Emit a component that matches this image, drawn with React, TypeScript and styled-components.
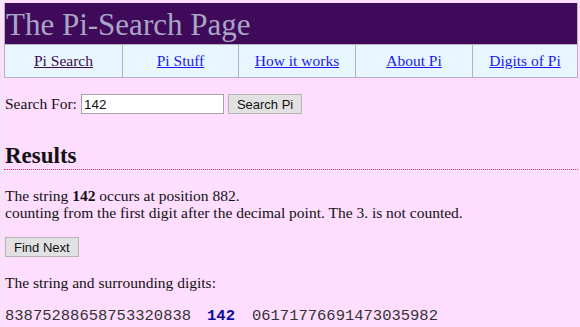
import React from 'react';
import styled, { createGlobalStyle } from 'styled-components';

const navItems = [
  { label: 'Pi Search', visited: true },
  { label: 'Pi Stuff', visited: false },
  { label: 'How it works', visited: false },
  { label: 'About Pi', visited: false },
  { label: 'Digits of Pi', visited: false },
];

const App: React.FC = () => {
  return (
    <>
      <GlobalStyle />
      <Page>
        <Masthead>
          <Title>The Pi-Search Page</Title>
          <NavBar>
            {navItems.map((item) => (
              <NavCell key={item.label}>
                <NavLink href="#" $visited={item.visited}>
                  {item.label}
                </NavLink>
              </NavCell>
            ))}
          </NavBar>
        </Masthead>

        <Content>
          <SearchForm onSubmit={(e) => e.preventDefault()}>
            <Label htmlFor="search">Search For:</Label>
            <SearchInput id="search" defaultValue="142" />
            <Button type="submit">Search Pi</Button>
          </SearchForm>

          <Heading>Results</Heading>

          <Text>
            The string <b>142</b> occurs at position 882.
            <br />
            counting from the first digit after the decimal point. The 3. is not counted.
          </Text>

          <Button type="button">Find Next</Button>

          <Text>The string and surrounding digits:</Text>

          <Digits>
            83875288658753320838
            <Match>142</Match>
            06171776691473035982
          </Digits>
        </Content>
      </Page>
    </>
  );
};

const GlobalStyle = createGlobalStyle`
  html, body {
    margin: 0;
    padding: 0;
    background: #ffddff;
  }
  body {
    font-family: "Liberation Serif", "Times New Roman", serif;
    color: #111;
  }
`;

const Page = styled.div`
  min-height: 327px;
  padding: 3px 2px 0 3px;
  border-left: 1px solid #ece6ee;
  box-sizing: border-box;
`;

const Masthead = styled.div`
  border: 1px solid #b8b0bc;
  border-top: none;
`;

const Title = styled.h1`
  margin: 0;
  height: 41px;
  padding: 0 0 0 1px;
  background: #400a5a;
  color: #a8a6c6;
  font-size: 31px;
  font-weight: normal;
  line-height: 44px;
`;

const NavBar = styled.nav`
  display: grid;
  grid-template-columns: 117px 116px 117px 117px 1fr;
  background: #e8f6ff;
  border-top: 1px solid #b8b0bc;
`;

const NavCell = styled.div`
  height: 32px;
  display: flex;
  align-items: center;
  justify-content: center;
  border-left: 1px solid #b4b4b4;

  &:first-child {
    border-left: none;
  }
`;

const NavLink = styled.a<{ $visited: boolean }>`
  font-size: 15.5px;
  color: ${(p) => (p.$visited ? '#3a0a4e' : '#1a1aee')};
  text-decoration: underline;
`;

const Content = styled.main`
  padding: 16px 0 0 1px;
  font-size: 15.5px;
`;

const SearchForm = styled.form`
  display: flex;
  align-items: center;
  gap: 4px;
  height: 20px;
`;

const Label = styled.label``;

const SearchInput = styled.input`
  width: 137px;
  height: 18px;
  padding: 0 2px;
  border: 1px solid #a8a0a8;
  font-family: "Liberation Sans", Arial, sans-serif;
  font-size: 13.5px;
  color: #111;
  background: #fff;
`;

const Button = styled.button`
  height: 20px;
  padding: 0 8px;
  border: 1px solid #b4b4b4;
  background: #e1e1e1;
  font-family: "Liberation Sans", Arial, sans-serif;
  font-size: 13px;
  color: #111;
  border-radius: 0;
`;

const Heading = styled.h2`
  margin: 29px 0 0 -1px;
  padding: 0 0 0 1px;
  font-size: 23px;
  line-height: 26px;
  border-bottom: 1px dotted #f0305a;
`;

const Text = styled.p`
  margin: 17px 0 16px;
  line-height: 17px;
`;

const Digits = styled.pre`
  margin: 14px 0 0;
  font-family: "Liberation Mono", "Courier New", monospace;
  font-size: 15.5px;
  color: #333;
`;

const Match = styled.b`
  margin: 0 17px 0 16px;
  color: #0a0aa0;
`;

export default App;
